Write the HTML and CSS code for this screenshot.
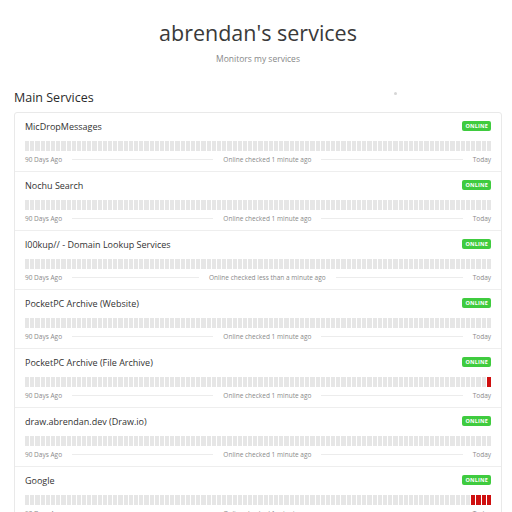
FILE: index.html
```html
<!DOCTYPE html>
<html lang="en">
<head>
  <meta charset="UTF-8">
  <meta name="viewport" content="width=device-width, initial-scale=1.0">
  <title>abrendan's services</title>
  <link rel="stylesheet" href="styles.css">
</head>
<body>
  <div class="container">
    <header class="page-header">
      <h1>abrendan's services</h1>
      <p class="subtitle">Monitors my services</p>
    </header>

    <div class="group-title">
      <h2>Main Services</h2>
      <span class="group-dot"></span>
    </div>

    <div id="serviceList" class="service-card"></div>
  </div>

  <script>
    // Services and the days (counted back from today) that had an outage
    const services = [
      { name: 'MicDropMessages', checked: '1 minute ago', down: [] },
      { name: 'Nochu Search', checked: '1 minute ago', down: [] },
      { name: 'l00kup// - Domain Lookup Services', checked: 'less than a minute ago', down: [] },
      { name: 'PocketPC Archive (Website)', checked: '1 minute ago', down: [] },
      { name: 'PocketPC Archive (File Archive)', checked: '1 minute ago', down: [0] },
      { name: 'draw.abrendan.dev (Draw.io)', checked: '1 minute ago', down: [] },
      { name: 'Google', checked: '1 minute ago', down: [0, 1, 2, 3] }
    ];

    const DAYS = 90;
    const serviceList = document.getElementById('serviceList');

    services.forEach(service => {
      const row = document.createElement('div');
      row.className = 'service-row';

      const head = document.createElement('div');
      head.className = 'service-head';
      head.innerHTML = `<span class="service-name"></span><span class="badge">ONLINE</span>`;
      head.querySelector('.service-name').textContent = service.name;

      const bars = document.createElement('div');
      bars.className = 'bars';
      for (let i = DAYS - 1; i >= 0; i--) {
        const bar = document.createElement('span');
        bar.className = service.down.includes(i) ? 'bar bar-down' : 'bar';
        bars.appendChild(bar);
      }

      const foot = document.createElement('div');
      foot.className = 'service-foot';
      foot.innerHTML = `<span>90 Days Ago</span><span class="rule"></span>` +
        `<span>Online checked ${service.checked}</span><span class="rule"></span><span>Today</span>`;

      row.appendChild(head);
      row.appendChild(bars);
      row.appendChild(foot);
      serviceList.appendChild(row);
    });
  </script>
</body>
</html>
```

FILE: styles.css
```css
* {
  box-sizing: border-box;
  margin: 0;
  padding: 0;
}

body {
  background-color: #ffffff;
  font-family: "Open Sans", "Noto Sans", Arial, sans-serif;
  color: #333333;
}

.container {
  padding: 0 10px 0 14px;
}

.page-header {
  text-align: center;
  padding-top: 16px;
}

h1 {
  font-size: 21.5px;
  font-weight: 400;
  color: #3a3a3a;
  line-height: 34px;
}

.subtitle {
  font-size: 8.5px;
  color: #888888;
  margin-top: 3px;
}

.group-title {
  display: flex;
  align-items: center;
  margin-top: 22px;
  height: 22px;
}

h2 {
  font-size: 12.5px;
  font-weight: 400;
  color: #2b2b2b;
}

.group-dot {
  width: 3px;
  height: 3px;
  border-radius: 50%;
  background-color: #d6d6d6;
  margin-left: 300px;
  margin-top: -8px;
}

.service-card {
  margin-top: 4px;
  border: 1px solid #e9e9e9;
  border-radius: 3px;
  background-color: #ffffff;
}

.service-row {
  padding: 6px 10px 0 10px;
  height: 59px;
  border-bottom: 1px solid #eeeeee;
}

.service-row:last-child {
  border-bottom: none;
}

.service-head {
  display: flex;
  justify-content: space-between;
  align-items: center;
  height: 14px;
}

.service-name {
  font-size: 9px;
  color: #333333;
}

.badge {
  background-color: #3fcb3f;
  color: #ffffff;
  font-size: 5.5px;
  font-weight: 700;
  padding: 2px 3px;
  border-radius: 2px;
  line-height: 6px;
  letter-spacing: 0.2px;
}

.bars {
  display: flex;
  gap: 1px;
  height: 10px;
  margin-top: 8px;
}

.bar {
  flex: 1;
  background-color: #e6e6e6;
}

.bar-down {
  background-color: #cf0f0f;
}

.service-foot {
  display: flex;
  align-items: center;
  gap: 10px;
  margin-top: 4px;
  font-size: 6.5px;
  color: #8a8a8a;
  white-space: nowrap;
}

.rule {
  flex: 1;
  height: 1px;
  background-color: #ececec;
}
```
